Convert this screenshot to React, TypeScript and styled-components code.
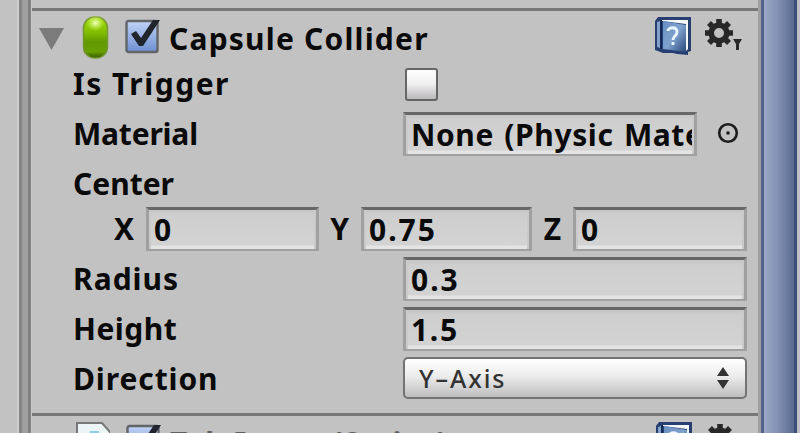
import React from "react";
import styled, { createGlobalStyle } from "styled-components";

const GlobalStyle = createGlobalStyle`
  * { box-sizing: border-box; }
  body { margin: 0; overflow: hidden; background: #c2c2c2; }
`;

const Screen = styled.main`
  width: 800px;
  height: 433px;
  display: flex;
  overflow: hidden;
  background: #c2c2c2;
  color: #0a0a0a;
  font: 700 30px/44px "Noto Sans", "Open Sans", sans-serif;
`;

const LeftEdge = styled.div`
  flex: 0 0 32px;
  background: linear-gradient(90deg, #c2c2c2 0 17px, #cecece 17px 19px, #858585 19px 22px,
    #a0a0a0 22px 28px, #808080 28px 31px, #cacaca 31px);
`;

const Inspector = styled.section`
  flex: 0 0 726px;
  padding-top: 8px;
  overflow: hidden;
`;

const RightEdge = styled.div`
  flex: 0 0 42px;
  background: linear-gradient(90deg, #a0a0a0 0 3px, #536389 3px 6px, #99a8c5 6px,
    #8695b7 18px, #596b91 36px, #3c4d78 36px 39px, #c0bfc5 39px);
`;

const Component = styled.article`
  height: 405px;
  border-top: 3px solid #777;
`;

const Header = styled.header`
  height: 51px;
  display: flex;
  align-items: flex-start;
`;

const Title = styled.span<{ $muted?: boolean }>`
  width: 494px;
  padding-left: 8px;
  padding-top: ${(p) => (p.$muted ? 5 : 6)}px;
  white-space: pre;
  letter-spacing: 1.2px;
  color: ${(p) => (p.$muted ? "#606060" : "#0a0a0a")};
`;

const Row = styled.div<{ $height?: number }>`
  height: ${(p) => p.$height ?? 50}px;
  padding-left: 41px;
  display: flex;
  align-items: flex-start;
`;

const Label = styled.span<{ $spacing?: number }>`
  flex: 0 0 330px;
  letter-spacing: ${(p) => p.$spacing ?? 0}px;
  white-space: nowrap;
`;

const Field = styled.div<{ $width: number; $spacing?: number }>`
  flex: 0 0 ${(p) => p.$width}px;
  min-width: 0;
  height: 44px;
  padding: 0 2px 0 5px;
  border: 3px solid #a0a0a0;
  border-top-color: #676767;
  border-bottom-width: 2px;
  background: linear-gradient(#c5c5c5 0, #cecece 5px, #d3d3d3 35px, #e4e4e4 36px);
  box-shadow: inset 2px 0 #cacaca, inset -2px 0 #cacaca;
  line-height: 39px;
  letter-spacing: ${(p) => p.$spacing ?? 0}px;
  white-space: nowrap;
`;

const Clip = styled.div`
  overflow: hidden;
  height: 39px;
  word-spacing: 2px;
`;

const Axis = styled.span<{ $width: number }>`
  flex: 0 0 ${(p) => p.$width}px;
  padding-right: 12px;
  text-align: right;
`;

const EmptyCheckbox = styled.div`
  width: 33px;
  height: 33px;
  margin: 6px 0 0 2px;
  border: 2px solid #666;
  border-radius: 3px;
  background: linear-gradient(#fff, #eee 50%, #bbb8bb);
`;

const Dropdown = styled.div`
  width: 344px;
  height: 42px;
  padding: 0 16px 0 14px;
  display: flex;
  justify-content: space-between;
  align-items: center;
  border: 2px solid #737373;
  border-radius: 5px;
  background: linear-gradient(#fff, #ececec 45%, #bfbdbf);
  color: #333;
  font-size: 25px;
  font-weight: 500;
  letter-spacing: 1.9px;
`;

const Graphic = styled.svg<{ $left?: number; $top?: number }>`
  display: block;
  flex: none;
  margin-left: ${(p) => p.$left ?? 0}px;
  margin-top: ${(p) => p.$top ?? 0}px;
`;

function CheckedBox() {
  return (
    <Graphic $left={16} $top={8} width="36" height="35" viewBox="0 0 36 35">
      <defs><linearGradient id="check" x2="0" y2="1"><stop stopColor="#c0d3f5" /><stop offset="1" stopColor="#6d8fd3" /></linearGradient></defs>
      <rect x="1.5" y="2" width="31" height="31" rx="2" fill="url(#check)" stroke="#626468" strokeWidth="2.4" />
      <path d="m6 15 5-3 5 7L28 1h7L18 27h-4Z" fill="#20242d" />
    </Graphic>
  );
}

function HelpBook() {
  return (
    <Graphic $top={5} width="37" height="40" viewBox="0 0 37 40">
      <defs><linearGradient id="cover" x2="1" y2="1"><stop stopColor="#688fc3" /><stop offset=".5" stopColor="#7fa2ce" /><stop offset="1" stopColor="#294879" /></linearGradient></defs>
      <path d="M3 1h33v34l-3 1v3l-11-1-4-1H8l-8-3V5Z" fill="#263e70" />
      <path d="M7 4h26v29l-2 2V8L7 5Z" fill="#f5f6fc" />
      <path d="M2 6 5 5v27l-3-1Z" fill="#83a0c8" />
      <path d="m8 5 23 4v27L8 33Z" fill="url(#cover)" />
      <path d="M6 4v29" stroke="#122b59" strokeWidth="2" />
      <path d="M13 15c0-4 9-5 9 1 0 4-4 4-4 8m0 2v3" fill="none" stroke="#edf5ff" strokeWidth="2.8" />
    </Graphic>
  );
}

function Gear() {
  return (
    <Graphic $left={13} $top={8} width="38" height="32" viewBox="0 0 38 32">
      <g stroke="#282828" strokeWidth="5.6">
        <path d="M14 0V28M0 14H28M4 4 24 24M24 4 4 24" />
      </g>
      <circle cx="14" cy="14" r="7.8" fill="#c2c2c2" stroke="#282828" strokeWidth="5.6" />
      <path d="M28 20h9l-3 5v6h-3v-6Z" fill="#282828" />
    </Graphic>
  );
}

function NumberRow({ name, value, spacing, valueSpacing }: { name: string; value: string; spacing: number; valueSpacing: number }) {
  return <Row><Label $spacing={spacing}>{name}</Label><Field $width={344} $spacing={valueSpacing}>{value}</Field></Row>;
}

export default function App() {
  return (
    <>
      <GlobalStyle />
      <Screen>
        <LeftEdge />
        <Inspector>
          <Component>
            <Header>
              <Graphic $left={7} $top={17} width="25" height="23"><path d="M0 0h25L12.5 22Z" fill="#7b7b7b" /></Graphic>
              <Graphic $left={18} $top={5} width="27" height="43" viewBox="0 0 27 43">
                <defs>
                  <linearGradient id="green" x2="0" y2="1"><stop stopColor="#a1dd10" /><stop offset=".38" stopColor="#81bd00" /><stop offset=".6" stopColor="#639a00" /><stop offset=".85" stopColor="#67a000" /><stop offset="1" stopColor="#355800" /></linearGradient>
                  <radialGradient id="shine"><stop stopColor="#f3ffc6" /><stop offset="1" stopColor="#d0ff55" stopOpacity="0" /></radialGradient>
                </defs>
                <rect x="1.5" y="1" width="24" height="41" rx="11" fill="url(#green)" stroke="#759632" strokeWidth="1.5" />
                <ellipse cx="13.5" cy="7" rx="9" ry="8" fill="url(#shine)" />
              </Graphic>
              <CheckedBox />
              <Title>Capsule Collider</Title>
              <HelpBook />
              <Gear />
            </Header>
            <Row><Label $spacing={1.5}>Is Trigger</Label><EmptyCheckbox /></Row>
            <Row>
              <Label $spacing={-0.2}>Material</Label>
              <Field $width={294} $spacing={0.6}><Clip>None (Physic Material)</Clip></Field>
              <Graphic $left={20} $top={10} width="22" height="22" viewBox="0 0 22 22"><circle cx="11" cy="11" r="8.8" fill="none" stroke="#1c1c1c" strokeWidth="2.6" /><rect x="9.5" y="9.5" width="3" height="3" fill="#111" /></Graphic>
            </Row>
            <Row $height={45}><Label>Center</Label></Row>
            <Row>
              <Axis $width={73}>X</Axis><Field $width={173}>0</Field>
              <Axis $width={42}>Y</Axis><Field $width={171} $spacing={2}>0.75</Field>
              <Axis $width={41}>Z</Axis><Field $width={174}>0</Field>
            </Row>
            <NumberRow name="Radius" value="0.3" spacing={1} valueSpacing={2} />
            <NumberRow name="Height" value="1.5" spacing={0.5} valueSpacing={1.7} />
            <Row><Label $spacing={0.9}>Direction</Label><Dropdown><span>Y–Axis</span><Graphic width="12" height="22"><path d="M6 0 12 9H0ZM0 13h12L6 22Z" fill="#333" /></Graphic></Dropdown></Row>
          </Component>
          <Component>
            <Header>
              <Graphic $left={44} $top={5} width="34" height="38"><path d="M1 38V2h25l8 9v27" fill="#edf4f5" stroke="#777" strokeWidth="2" /><path d="M14 10h9v10H11Z" fill="#8fd0e7" /></Graphic>
              <CheckedBox />
              <Title $muted>Tab Input (Script)</Title>
              <HelpBook />
              <Gear />
            </Header>
          </Component>
        </Inspector>
        <RightEdge />
      </Screen>
    </>
  );
}
